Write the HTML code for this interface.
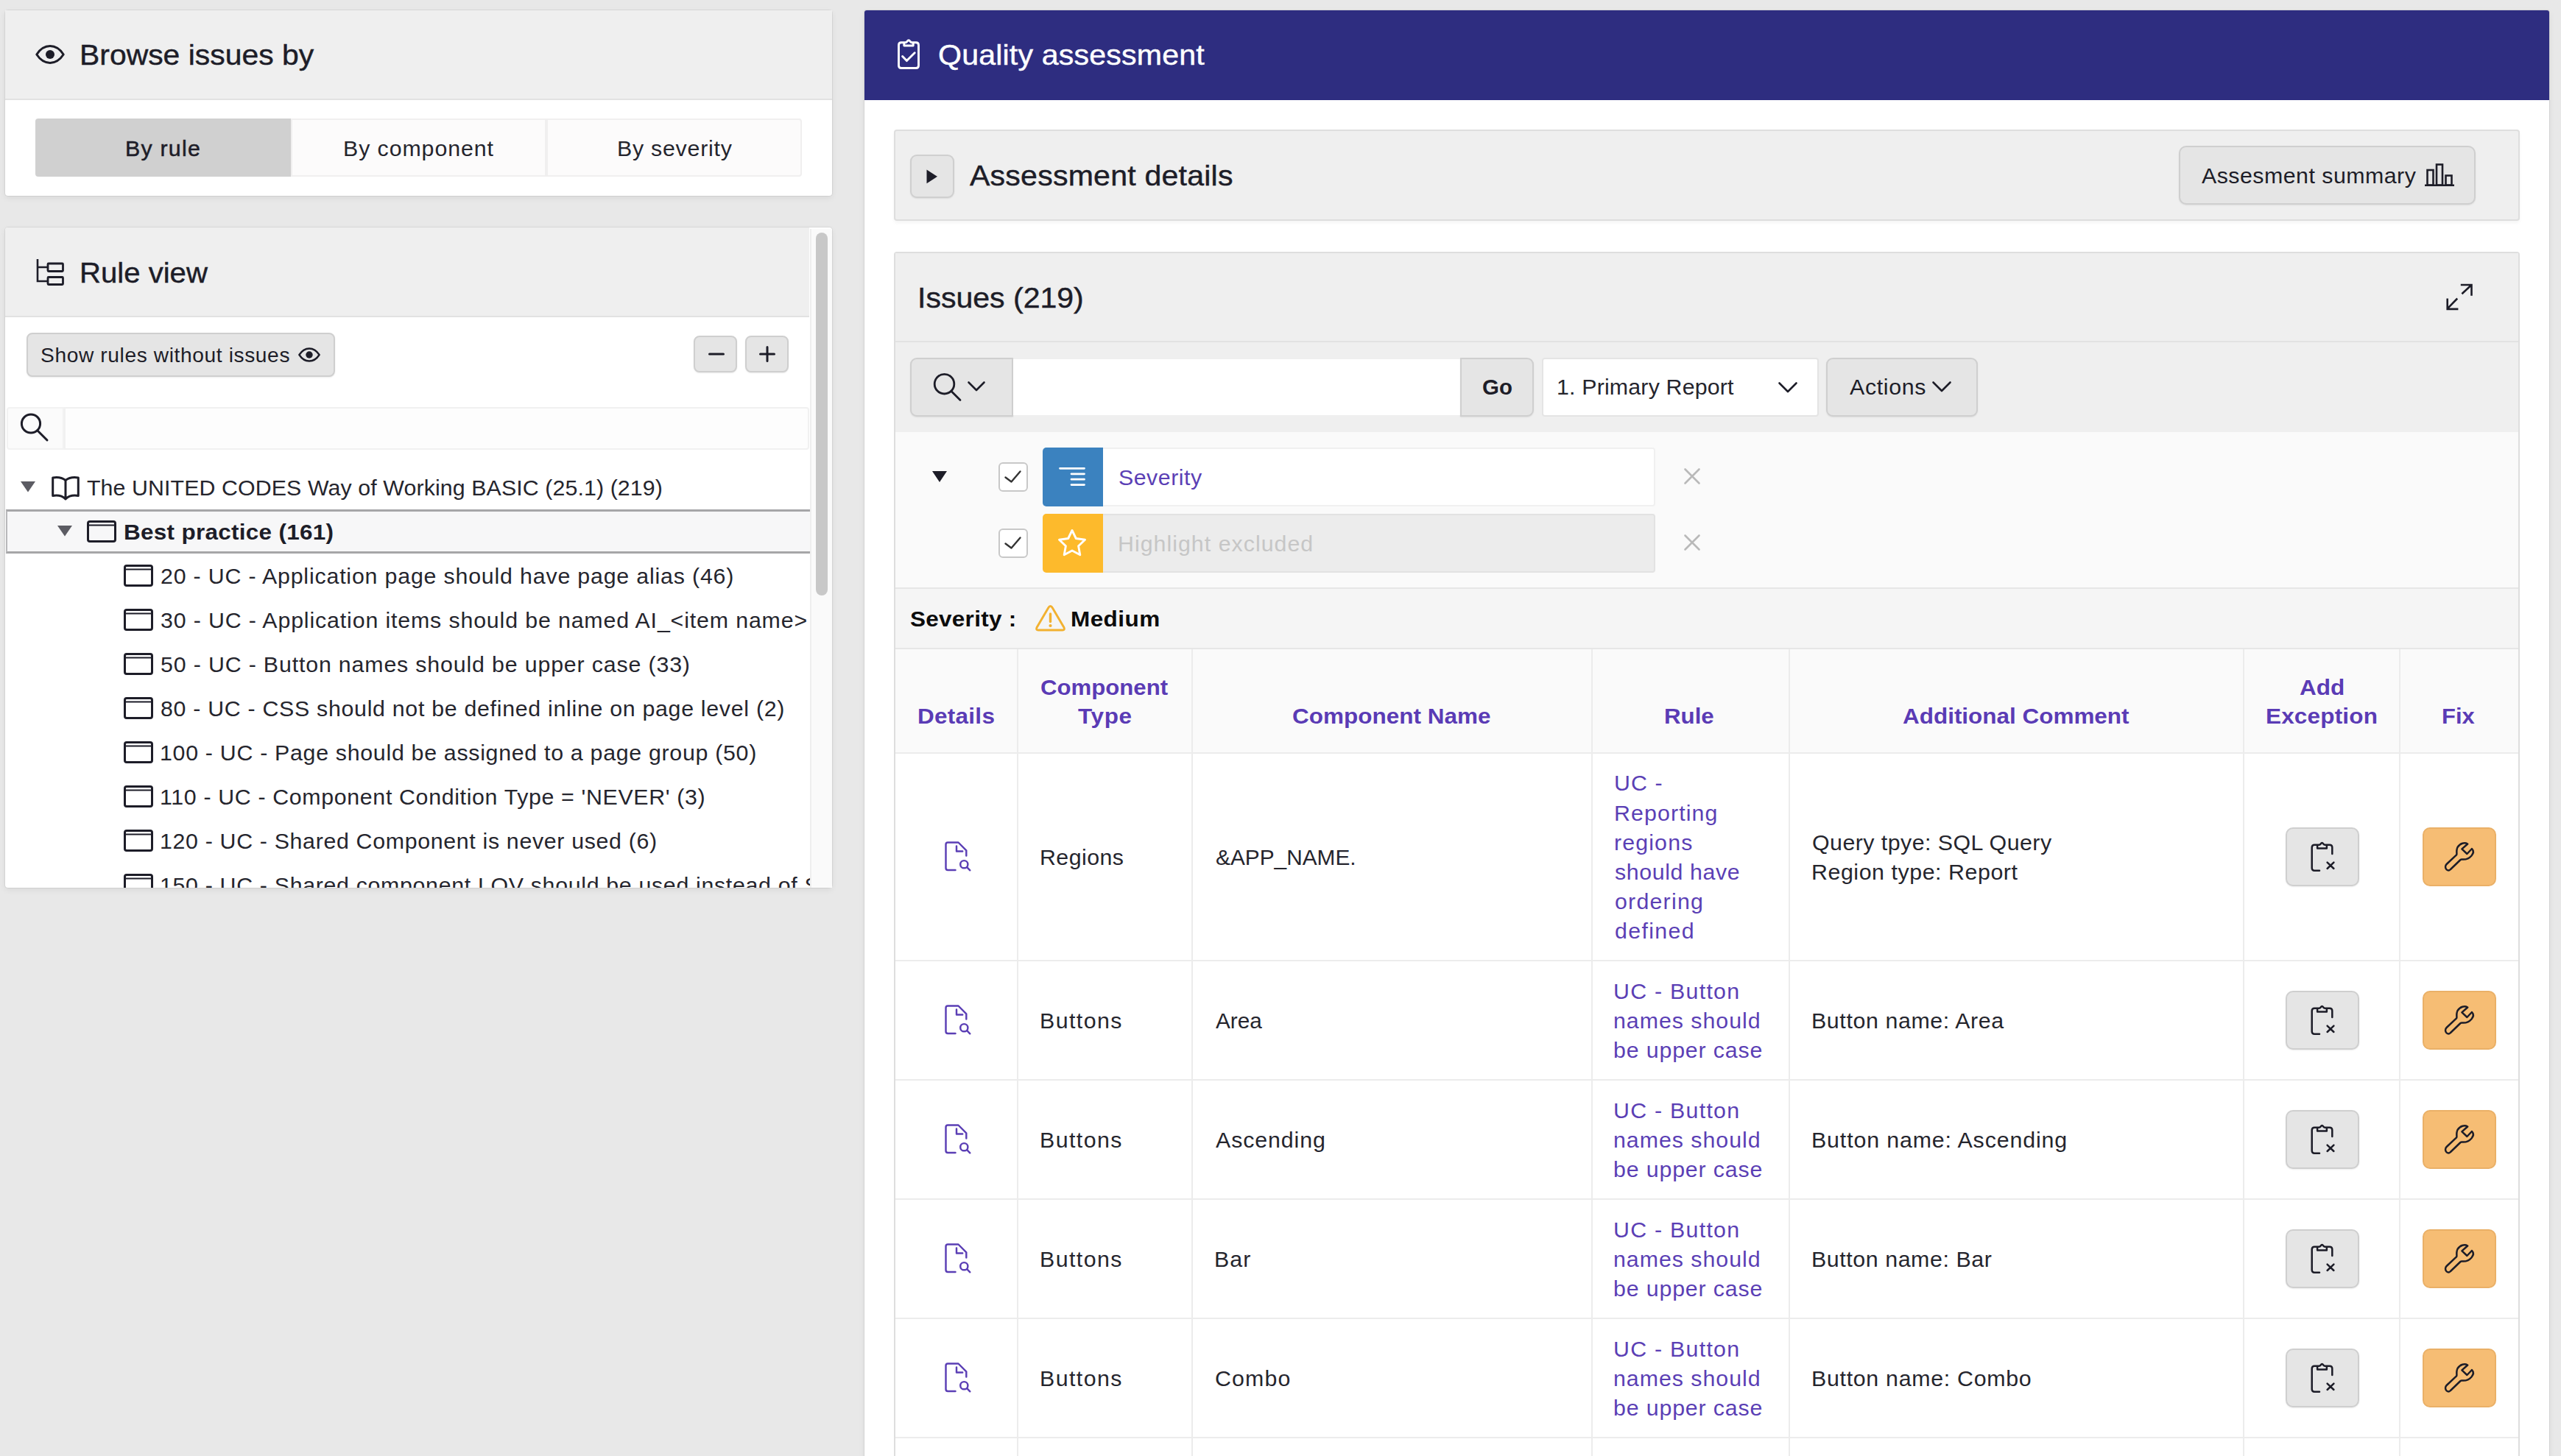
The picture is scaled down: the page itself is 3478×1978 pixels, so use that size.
<!DOCTYPE html>
<html><head><meta charset="utf-8">
<style>
*{box-sizing:border-box;margin:0;padding:0}
html,body{width:3478px;height:1978px;overflow:hidden;background:#e8e8e8;font-family:"Liberation Sans",sans-serif;color:#25252d}
.a{position:absolute}
.t{position:absolute;white-space:nowrap;line-height:1}
svg{position:absolute;overflow:visible}
.panel{position:absolute;background:#fff;box-shadow:0 3px 8px rgba(0,0,0,.07),0 0 0 1px rgba(0,0,0,.06);border-radius:4px}
.phead{position:absolute;left:0;top:0;right:0;height:122px;background:#efefef;border-bottom:2px solid #e2e2e2}
.h1{font-size:39.7px;color:#1d1d28;-webkit-text-stroke:.45px #1d1d28}
.btn{position:absolute;background:#e5e5e5;border:2px solid #cfcfcf;border-radius:8px;box-shadow:0 1px 2px rgba(0,0,0,.08)}
.body{font-size:29.3px;color:#25252d}
.lnk{color:#5b3fb5}
</style></head><body>

<!-- LEFT PANEL 1 -->
<div class="panel" style="left:7px;top:14px;width:1123px;height:252px">
  <div class="phead"></div>
</div>

<!-- L1 content -->
<svg style="left:48px;top:61px" width="40" height="26" viewBox="0 0 40 26"><path d="M1.8 13 C8 3.5 14 1.6 20 1.6 S32 3.5 38.2 13 C32 22.5 26 24.4 20 24.4 S8 22.5 1.8 13Z" fill="none" stroke="#1d1d28" stroke-width="3" stroke-linejoin="round"/><circle cx="20" cy="13" r="6" fill="#1d1d28"/></svg>
<div class="t h1" id="t_browse" style="left:107.6px;top:54.8px;letter-spacing:0.000px;transform:scaleX(1.0304);transform-origin:0 0;">Browse issues by</div>
<div class="a" style="left:48px;top:161px;width:347px;height:79px;background:#d0d0d0;border-radius:4px 0 0 4px"></div>
<div class="a" style="left:395px;top:161px;width:347px;height:79px;background:#fcfbfb;border:2px solid #f0efef"></div>
<div class="a" style="left:742px;top:161px;width:347px;height:79px;background:#fcfbfb;border:2px solid #f0efef;border-radius:0 4px 4px 0"></div>
<div class="t" id="t_byrule" style="left:170.4px;top:187.2px;letter-spacing:1.195px;transform:scaleX(1.0350);transform-origin:0 0;font-size:29.3px;color:#1d1d28;-webkit-text-stroke:.5px #1d1d28">By rule</div>
<div class="t" id="t_bycomp" style="left:466.3px;top:187.2px;letter-spacing:0.889px;transform:scaleX(1.0350);transform-origin:0 0;font-size:29.3px;color:#25252d">By component</div>
<div class="t" id="t_bysev" style="left:837.6px;top:187.2px;letter-spacing:0.731px;transform:scaleX(1.0350);transform-origin:0 0;font-size:29.3px;color:#25252d">By severity</div>
<!-- LEFT PANEL 2 -->
<div class="panel" id="p2" style="left:7px;top:309px;width:1123px;height:897px;overflow:hidden">
  <div class="phead" style="right:31px"></div>
</div>

<!-- L2 content -->
<svg style="left:49px;top:351px" width="38" height="37" viewBox="0 0 38 37"><path d="M2 1V31H15M2 12H15" fill="none" stroke="#1d1d28" stroke-width="2.6"/><rect x="16" y="7" width="20.5" height="10.5" rx="1" fill="none" stroke="#1d1d28" stroke-width="2.8"/><rect x="16" y="25.5" width="20.5" height="10" rx="1" fill="none" stroke="#1d1d28" stroke-width="2.8"/></svg>
<div class="t h1" id="t_ruleview" style="left:107.7px;top:351.4px;letter-spacing:0.000px;transform:scaleX(1.0106);transform-origin:0 0;">Rule view</div>
<div class="btn" style="left:36px;top:452px;width:419px;height:60px"></div>
<div class="t" id="t_show" style="left:55.4px;top:469.0px;letter-spacing:0.592px;transform:scaleX(1.0350);transform-origin:0 0;font-size:27.2px;color:#1d1d28">Show rules without issues</div>
<svg style="left:405px;top:472px" width="30" height="20" viewBox="0 0 40 26"><path d="M1.8 13 C8 3.5 14 1.6 20 1.6 S32 3.5 38.2 13 C32 22.5 26 24.4 20 24.4 S8 22.5 1.8 13Z" fill="none" stroke="#1d1d28" stroke-width="3.2" stroke-linejoin="round"/><circle cx="20" cy="13" r="6.3" fill="#1d1d28"/></svg>
<div class="btn" style="left:942px;top:456px;width:59px;height:50px"></div>
<div class="btn" style="left:1012px;top:456px;width:59px;height:50px"></div>
<svg style="left:962px;top:479px" width="22" height="4"><line x1="1.5" y1="2" x2="20.5" y2="2" stroke="#1d1d28" stroke-width="3" stroke-linecap="round"/></svg>
<svg style="left:1031px;top:470px" width="22" height="22"><path d="M1.5 11H20.5M11 1.5V20.5" stroke="#1d1d28" stroke-width="3" stroke-linecap="round" fill="none"/></svg>
<div class="a" style="left:9px;top:553px;width:78px;height:58px;background:#fbfbfb;border:2px solid #f2f2f2;border-radius:4px 0 0 4px"></div>
<div class="a" style="left:87px;top:553px;width:1012px;height:58px;background:#fdfdfd;border:2px solid #f1f1f1;border-radius:0 4px 4px 0"></div>
<svg style="left:26px;top:560px" width="42" height="42" viewBox="0 0 42 42"><circle cx="16" cy="15.5" r="12.6" fill="none" stroke="#1d1d28" stroke-width="3"/><line x1="25" y1="25" x2="38" y2="38" stroke="#1d1d28" stroke-width="3" stroke-linecap="round"/></svg>
<div class="a" id="tree" style="left:7px;top:620px;width:1094px;height:586px;overflow:hidden">
<div class="a" style="left:0;top:72px;width:1100px;height:60px;background:#f7f7f8;border:3px solid #a6a6a8;border-left:2px solid #b8b8ba;border-right:none;margin-left:1px"></div>
<svg style="left:21.0px;top:34.25px" width="20" height="14.5" viewBox="0 0 20 14.5"><path d="M0 0H20L10.0 14.5Z" fill="#5c5c63"/></svg><svg style="left:63px;top:26px" width="38" height="35" viewBox="0 0 38 35"><path d="M19 6.5C14 2.5 8 2 1.7 3V27.5C8 26.5 14 27 19 32C24 27 30 26.500 36.300 27.500V3C30 2 24 2.500 19 6.500V31" fill="none" stroke="#1d1d28" stroke-width="3" stroke-linejoin="round"/></svg><div class="t body" id="t_root" style="left:111.4px;top:28.1px;letter-spacing:0.099px;transform:scaleX(1.0350);transform-origin:0 0;">The UNITED CODES Way of Working BASIC (25.1) (219)</div><svg style="left:71.0px;top:94.25px" width="20" height="14.5" viewBox="0 0 20 14.5"><path d="M0 0H20L10.0 14.5Z" fill="#5c5c63"/></svg><svg style="left:111px;top:87px" width="40" height="30" viewBox="0 0 40 30"><rect x="1.5" y="1.5" width="37" height="27" rx="2.5" fill="none" stroke="#1d1d28" stroke-width="3"/><line x1="1.5" y1="6.5" x2="38.5" y2="6.5" stroke="#1d1d28" stroke-width="2.2"/></svg><div class="t body" id="t_best" style="left:160.7px;top:88.4px;letter-spacing:0.255px;transform:scaleX(1.0750);transform-origin:0 0;font-weight:bold;color:#1d1d28">Best practice (161)</div><svg style="left:161px;top:147px" width="40" height="30" viewBox="0 0 40 30"><rect x="1.5" y="1.5" width="37" height="27" rx="2.5" fill="none" stroke="#1d1d28" stroke-width="3"/><line x1="1.5" y1="6.5" x2="38.5" y2="6.5" stroke="#1d1d28" stroke-width="2.2"/></svg><div class="t body" id="t_r0" style="left:211.0px;top:148.4px;letter-spacing:0.792px;transform:scaleX(1.0350);transform-origin:0 0;">20 - UC - Application page should have page alias (46)</div><svg style="left:161px;top:207px" width="40" height="30" viewBox="0 0 40 30"><rect x="1.5" y="1.5" width="37" height="27" rx="2.5" fill="none" stroke="#1d1d28" stroke-width="3"/><line x1="1.5" y1="6.5" x2="38.5" y2="6.5" stroke="#1d1d28" stroke-width="2.2"/></svg><div class="t body" id="t_r1" style="left:211.0px;top:208.4px;letter-spacing:0.829px;transform:scaleX(1.0350);transform-origin:0 0;">30 - UC - Application items should be named AI_&lt;item name&gt;</div><svg style="left:161px;top:267px" width="40" height="30" viewBox="0 0 40 30"><rect x="1.5" y="1.5" width="37" height="27" rx="2.5" fill="none" stroke="#1d1d28" stroke-width="3"/><line x1="1.5" y1="6.5" x2="38.5" y2="6.5" stroke="#1d1d28" stroke-width="2.2"/></svg><div class="t body" id="t_r2" style="left:211.0px;top:268.4px;letter-spacing:0.816px;transform:scaleX(1.0350);transform-origin:0 0;">50 - UC - Button names should be upper case (33)</div><svg style="left:161px;top:327px" width="40" height="30" viewBox="0 0 40 30"><rect x="1.5" y="1.5" width="37" height="27" rx="2.5" fill="none" stroke="#1d1d28" stroke-width="3"/><line x1="1.5" y1="6.5" x2="38.5" y2="6.5" stroke="#1d1d28" stroke-width="2.2"/></svg><div class="t body" id="t_r3" style="left:211.0px;top:328.4px;letter-spacing:0.682px;transform:scaleX(1.0350);transform-origin:0 0;">80 - UC - CSS should not be defined inline on page level (2)</div><svg style="left:161px;top:387px" width="40" height="30" viewBox="0 0 40 30"><rect x="1.5" y="1.5" width="37" height="27" rx="2.5" fill="none" stroke="#1d1d28" stroke-width="3"/><line x1="1.5" y1="6.5" x2="38.5" y2="6.5" stroke="#1d1d28" stroke-width="2.2"/></svg><div class="t body" id="t_r4" style="left:209.9px;top:388.4px;letter-spacing:0.684px;transform:scaleX(1.0350);transform-origin:0 0;">100 - UC - Page should be assigned to a page group (50)</div><svg style="left:161px;top:447px" width="40" height="30" viewBox="0 0 40 30"><rect x="1.5" y="1.5" width="37" height="27" rx="2.5" fill="none" stroke="#1d1d28" stroke-width="3"/><line x1="1.5" y1="6.5" x2="38.5" y2="6.5" stroke="#1d1d28" stroke-width="2.2"/></svg><div class="t body" id="t_r5" style="left:209.9px;top:448.4px;letter-spacing:0.637px;transform:scaleX(1.0350);transform-origin:0 0;">110 - UC - Component Condition Type = 'NEVER' (3)</div><svg style="left:161px;top:507px" width="40" height="30" viewBox="0 0 40 30"><rect x="1.5" y="1.5" width="37" height="27" rx="2.5" fill="none" stroke="#1d1d28" stroke-width="3"/><line x1="1.5" y1="6.5" x2="38.5" y2="6.5" stroke="#1d1d28" stroke-width="2.2"/></svg><div class="t body" id="t_r6" style="left:209.9px;top:508.4px;letter-spacing:0.650px;transform:scaleX(1.0350);transform-origin:0 0;">120 - UC - Shared Component is never used (6)</div><svg style="left:161px;top:567px" width="40" height="30" viewBox="0 0 40 30"><rect x="1.5" y="1.5" width="37" height="27" rx="2.5" fill="none" stroke="#1d1d28" stroke-width="3"/><line x1="1.5" y1="6.5" x2="38.5" y2="6.5" stroke="#1d1d28" stroke-width="2.2"/></svg><div class="t body" id="t_r7" style="left:209.9px;top:568.4px;letter-spacing:0.656px;transform:scaleX(1.0350);transform-origin:0 0;">150 - UC - Shared component LOV should be used instead of Static values</div></div>
<div class="a" style="left:1100px;top:311px;width:30px;height:895px;background:#fafafa;border-left:2px solid #eeeeee"></div><div class="a" style="left:1108px;top:316px;width:16px;height:493px;background:#c8c8c8;border-radius:8px"></div>
<!-- RIGHT PANEL -->
<div class="panel" id="rp" style="left:1174px;top:14px;width:2288px;height:2000px;border-radius:3px">
  <div class="a" style="left:0;top:0;right:0;height:122px;background:#2e2d80;border-radius:3px 3px 0 0"></div>
</div>


<!-- R content -->
<svg style="left:1218px;top:53px" width="32" height="42" viewBox="0 0 32 42"><path d="M2.500 8.200Q2.500 4.700 6 4.700H11.500C13 4.700 13.400 4 14 3.200Q16 0.300 18 3.200C18.600 4 19 4.700 20.500 4.700H26Q29.500 4.700 29.500 8.200V36Q29.500 39.500 26 39.500H6Q2.500 39.500 2.500 36ZM9.800 4.700V9H22.200V4.700M7.600 23.600L13.400 29.600L24.200 18.700" fill="none" stroke="#fff" stroke-width="2.9" stroke-linecap="round" stroke-linejoin="round"/></svg>
<div class="t h1" id="t_qa" style="left:1273.6px;top:55.0px;letter-spacing:0.185px;transform:scaleX(1.0350);transform-origin:0 0;color:#fff;-webkit-text-stroke:.45px #fff">Quality assessment</div>

<div class="a" style="left:1214px;top:176px;width:2208px;height:124px;background:#efefef;border:2px solid #dedede;border-radius:4px;box-shadow:0 3px 4px rgba(0,0,0,.04)"></div>
<div class="btn" style="left:1236px;top:210px;width:60px;height:59px;border-radius:9px"></div>
<svg style="left:1258px;top:230px" width="16" height="20"><path d="M0.500 0.500L15 9.800L0.500 19.200Z" fill="#1d1d28"/></svg>
<div class="t h1" id="t_ad" style="left:1317.0px;top:219.0px;letter-spacing:0.203px;transform:scaleX(1.0350);transform-origin:0 0;">Assessment details</div>
<div class="btn" style="left:2959px;top:198px;width:403px;height:80px;border-radius:10px"></div>
<div class="t" id="t_as" style="left:2990.4px;top:224.2px;letter-spacing:0.468px;transform:scaleX(1.0350);transform-origin:0 0;font-size:29.3px;color:#1d1d28">Assesment summary</div>
<svg style="left:3292px;top:221px" width="42" height="33" viewBox="0 0 42 33"><path d="M1 30.700H41" stroke="#1d1d28" stroke-width="2.6"/><rect x="4.500" y="10" width="8" height="20.500" fill="none" stroke="#1d1d28" stroke-width="2.6"/><rect x="17" y="2.500" width="8" height="28" fill="none" stroke="#1d1d28" stroke-width="2.6"/><rect x="29.500" y="17.500" width="8" height="13" fill="none" stroke="#1d1d28" stroke-width="2.6"/></svg>

<div class="a" id="issues" style="left:1214px;top:342px;width:2208px;height:1700px;background:#fff;border:2px solid #dedede;border-radius:4px"></div>
<div class="a" style="left:1216px;top:344px;width:2204px;height:121px;background:#efefef;border-bottom:2px solid #e2e2e2"></div>
<div class="t h1" id="t_iss" style="left:1245.6px;top:385.1px;letter-spacing:0.000px;transform:scaleX(1.0338);transform-origin:0 0;">Issues (219)</div>
<svg style="left:3321px;top:385px" width="38" height="38" viewBox="0 0 38 38"><path d="M22.400 14.300L35.500 2M20.800 2H35.500V16.700M16.200 20.500L2.700 34.400M2.700 20.500V34.900H17.400" fill="none" stroke="#1d1d28" stroke-width="2.600" stroke-linecap="butt" stroke-linejoin="miter"/></svg>

<div class="a" style="left:1216px;top:465px;width:2204px;height:122px;background:#efefef"></div>
<div class="btn" style="left:1236px;top:486px;width:140px;height:80px;border-radius:9px 0 0 9px"></div>
<svg style="left:1266px;top:505px" width="44" height="44" viewBox="0 0 44 44"><circle cx="16.500" cy="16.700" r="13.300" fill="none" stroke="#1d1d28" stroke-width="2.800"/><line x1="26" y1="26.500" x2="38" y2="38.500" stroke="#1d1d28" stroke-width="2.800" stroke-linecap="round"/></svg>
<svg style="left:1314px;top:518px" width="24" height="14"><path d="M1.500 1.500L12 12L22.500 1.500" fill="none" stroke="#1d1d28" stroke-width="2.600" stroke-linecap="round" stroke-linejoin="round"/></svg>
<div class="a" style="left:1376px;top:488px;width:608px;height:76px;background:#fff"></div>
<div class="btn" style="left:1983px;top:486px;width:100px;height:80px;border-radius:0 9px 9px 0"></div>
<div class="t" id="t_go" style="left:2013.3px;top:511.1px;letter-spacing:0.000px;transform:scaleX(1.0051);transform-origin:0 0;font-size:29.3px;font-weight:bold;color:#1d1d28">Go</div>
<div class="a" style="left:2094px;top:486px;width:376px;height:80px;background:#fff;border:2px solid #e4e4e4;border-radius:4px"></div>
<div class="t" id="t_pr" style="left:2113.7px;top:511.1px;letter-spacing:0.176px;transform:scaleX(1.0350);transform-origin:0 0;font-size:29.3px;color:#25252d">1. Primary Report</div>
<svg style="left:2415px;top:519px" width="26" height="15"><path d="M1.500 1.500L13 13L24.500 1.500" fill="none" stroke="#1d1d28" stroke-width="2.600" stroke-linecap="round" stroke-linejoin="round"/></svg>
<div class="btn" style="left:2480px;top:486px;width:206px;height:80px;border-radius:9px"></div>
<div class="t" id="t_act" style="left:2512.0px;top:511.1px;letter-spacing:0.640px;transform:scaleX(1.0350);transform-origin:0 0;font-size:29.3px;color:#1d1d28">Actions</div>
<svg style="left:2624px;top:518px" width="26" height="15"><path d="M1.500 1.500L13 13L24.500 1.500" fill="none" stroke="#1d1d28" stroke-width="2.600" stroke-linecap="round" stroke-linejoin="round"/></svg>

<div class="a" style="left:1216px;top:587px;width:2204px;height:213px;background:#fafafa;border-bottom:2px solid #e6e6e6"></div>
<svg style="left:1266px;top:640px" width="20" height="15"><path d="M0 0H20L10 15Z" fill="#1d1d28"/></svg>
<div class="a" style="left:1356px;top:628px;width:40px;height:40px;background:#fff;border:2px solid #c8c8c8;border-radius:6px"></div><svg style="left:1356px;top:628px" width="40" height="40"><path d="M9.500 20.500L17.500 26.500L29.500 12.500" fill="none" stroke="#333" stroke-width="2.4" stroke-linecap="round" stroke-linejoin="round"/></svg><div class="a" style="left:1356px;top:718px;width:40px;height:40px;background:#fff;border:2px solid #c8c8c8;border-radius:6px"></div><svg style="left:1356px;top:718px" width="40" height="40"><path d="M9.500 20.500L17.500 26.500L29.500 12.500" fill="none" stroke="#333" stroke-width="2.4" stroke-linecap="round" stroke-linejoin="round"/></svg>
<div class="a" style="left:1416px;top:608px;width:82px;height:80px;background:#3b82bf;border-radius:5px 0 0 5px"></div>
<svg style="left:1438px;top:634px" width="36" height="27"><path d="M1.500 2.300H34.500M17 9.800H34.500M17 17.200H34.500M17 24.600H34.500" stroke="#fff" stroke-width="2.800" stroke-linecap="round"/></svg>
<div class="a" style="left:1498px;top:608px;width:750px;height:80px;background:#fff;border:2px solid #f0f0f0;border-left:none;border-radius:0 4px 4px 0"></div>
<div class="t lnk" id="t_sev" style="left:1518.7px;top:634.2px;letter-spacing:0.500px;transform:scaleX(1.0350);transform-origin:0 0;font-size:29.3px">Severity</div>
<div class="a" style="left:1416px;top:698px;width:82px;height:80px;background:#fdba2c;border-radius:5px 0 0 5px"></div>
<svg style="left:1436px;top:718px" width="40" height="38" viewBox="0 0 40 38"><path d="M20 2.500L25.300 13.500L37.500 15.200L28.600 23.700L30.800 35.800L20 30L9.200 35.800L11.400 23.700L2.500 15.200L14.700 13.500Z" fill="none" stroke="#fff" stroke-width="2.900" stroke-linejoin="round"/></svg>
<div class="a" style="left:1498px;top:698px;width:750px;height:80px;background:#ececec;border:2px solid #e2e2e2;border-left:none;border-radius:0 4px 4px 0"></div>
<div class="t" id="t_hl" style="left:1517.6px;top:723.9px;letter-spacing:0.987px;transform:scaleX(1.0350);transform-origin:0 0;font-size:29.3px;color:#c6c6c6">Highlight excluded</div>
<svg style="left:2287px;top:636px" width="22" height="22"><path d="M1.500 1.500L20.500 20.500M20.500 1.500L1.500 20.500" stroke="#b9b9b9" stroke-width="2.6" stroke-linecap="round"/></svg><svg style="left:2287px;top:726px" width="22" height="22"><path d="M1.500 1.500L20.500 20.500M20.500 1.500L1.500 20.500" stroke="#b9b9b9" stroke-width="2.6" stroke-linecap="round"/></svg>
<div class="a" style="left:1216px;top:800px;width:2204px;height:82px;background:#f5f5f5;border-bottom:2px solid #e6e6e6"></div>
<div class="t" id="t_sevl" style="left:1236.1px;top:826.0px;letter-spacing:0.248px;transform:scaleX(1.0750);transform-origin:0 0;font-size:29.3px;font-weight:bold;color:#0c0c0c">Severity :</div>
<svg style="left:1405px;top:821px" width="43" height="37" viewBox="0 0 43 37"><path d="M21.500 2.500Q23 2.500 24 4.300L40 31.500Q41.500 35 38 35H5Q1.500 35 3 31.500L19 4.300Q20 2.500 21.500 2.500Z" fill="none" stroke="#f2b130" stroke-width="2.900" stroke-linejoin="round"/><path d="M21.500 13V23.500" stroke="#f2b130" stroke-width="3.400" stroke-linecap="round"/><circle cx="21.500" cy="29" r="2.100" fill="#f2b130"/></svg>
<div class="t" id="t_med" style="left:1454.1px;top:826.0px;letter-spacing:0.405px;transform:scaleX(1.0750);transform-origin:0 0;font-size:29.3px;font-weight:bold;color:#0c0c0c">Medium</div>
<div class="a" style="left:1216px;top:882px;width:2204px;height:141px;background:#fafafa"></div>
<div class="a" style="left:1216px;top:1022px;width:2204px;height:2px;background:#ececec"></div><div class="a" style="left:1216px;top:1304px;width:2204px;height:2px;background:#ececec"></div><div class="a" style="left:1216px;top:1466px;width:2204px;height:2px;background:#ececec"></div><div class="a" style="left:1216px;top:1628px;width:2204px;height:2px;background:#ececec"></div><div class="a" style="left:1216px;top:1790px;width:2204px;height:2px;background:#ececec"></div><div class="a" style="left:1216px;top:1952px;width:2204px;height:2px;background:#ececec"></div><div class="a" style="left:1381px;top:882px;width:2px;height:1100px;background:#ececec"></div><div class="a" style="left:1618px;top:882px;width:2px;height:1100px;background:#ececec"></div><div class="a" style="left:2161px;top:882px;width:2px;height:1100px;background:#ececec"></div><div class="a" style="left:2429px;top:882px;width:2px;height:1100px;background:#ececec"></div><div class="a" style="left:3046px;top:882px;width:2px;height:1100px;background:#ececec"></div><div class="a" style="left:3258px;top:882px;width:2px;height:1100px;background:#ececec"></div>
<style>.hd{font-size:29.3px;font-weight:bold;color:#5a3bb5}.cell{font-size:29.3px;color:#25252d}.cell.lnk{color:#5b3fb5}</style><div class="t hd" id="h_det" style="left:1246.1px;top:958.1px;letter-spacing:0.252px;transform:scaleX(1.0750);transform-origin:0 0;">Details</div><div class="t hd" id="h_c1" style="left:1412.6px;top:918.6px;letter-spacing:0.000px;transform:scaleX(1.0636);transform-origin:0 0;">Component</div><div class="t hd" id="h_c2" style="left:1464.4px;top:958.3px;letter-spacing:0.597px;transform:scaleX(1.0750);transform-origin:0 0;">Type</div><div class="t hd" id="h_cn" style="left:1755.0px;top:958.3px;letter-spacing:0.000px;transform:scaleX(1.0747);transform-origin:0 0;">Component Name</div><div class="t hd" id="h_rule" style="left:2260.4px;top:958.3px;letter-spacing:0.000px;transform:scaleX(1.0672);transform-origin:0 0;">Rule</div><div class="t hd" id="h_ac" style="left:2584.3px;top:958.3px;letter-spacing:0.000px;transform:scaleX(1.0737);transform-origin:0 0;">Additional Comment</div><div class="t hd" id="h_a1" style="left:3122.7px;top:918.6px;letter-spacing:0.023px;transform:scaleX(1.0750);transform-origin:0 0;">Add</div><div class="t hd" id="h_a2" style="left:3076.7px;top:958.3px;letter-spacing:0.163px;transform:scaleX(1.0750);transform-origin:0 0;">Exception</div><div class="t hd" id="h_fix" style="left:3315.7px;top:958.3px;letter-spacing:0.000px;transform:scaleX(1.0550);transform-origin:0 0;">Fix</div>
<svg style="left:1283px;top:1142.6px" width="36" height="41" viewBox="0 0 36 41"><path d="M14.5 39H4.2Q1.5 39 1.5 36.300V4.200Q1.500 1.500 4.200 1.500H18.500L29.300 12.300V19.500M16 6.500V13.500H24.200" fill="none" stroke="#5b3fb5" stroke-width="2.45" stroke-linecap="round" stroke-linejoin="round"/><circle cx="26.3" cy="31.200" r="5.1" fill="none" stroke="#5b3fb5" stroke-width="2.45"/><line x1="30.200" y1="35.200" x2="34.300" y2="39.300" stroke="#5b3fb5" stroke-width="2.45" stroke-linecap="round"/></svg><div class="t cell " id="c0t_0" style="left:1412.3px;top:1150.4px;letter-spacing:0.444px;transform:scaleX(1.0350);transform-origin:0 0;">Regions</div><div class="t cell " id="c0n_0" style="left:1650.5px;top:1150.4px;letter-spacing:0.000px;transform:scaleX(1.0179);transform-origin:0 0;">&amp;APP_NAME.</div><div class="t cell lnk" id="c0r_0" style="left:2191.9px;top:1049.4px;letter-spacing:1.064px;transform:scaleX(1.0350);transform-origin:0 0;">UC -</div><div class="t cell lnk" id="c0r_1" style="left:2191.9px;top:1089.5px;letter-spacing:1.074px;transform:scaleX(1.0350);transform-origin:0 0;">Reporting</div><div class="t cell lnk" id="c0r_2" style="left:2191.9px;top:1129.6px;letter-spacing:1.102px;transform:scaleX(1.0350);transform-origin:0 0;">regions</div><div class="t cell lnk" id="c0r_3" style="left:2193.0px;top:1169.8px;letter-spacing:0.584px;transform:scaleX(1.0350);transform-origin:0 0;">should have</div><div class="t cell lnk" id="c0r_4" style="left:2193.0px;top:1209.9px;letter-spacing:1.190px;transform:scaleX(1.0350);transform-origin:0 0;">ordering</div><div class="t cell lnk" id="c0r_5" style="left:2193.0px;top:1250.0px;letter-spacing:1.312px;transform:scaleX(1.0350);transform-origin:0 0;">defined</div><div class="t cell " id="c0c_0" style="left:2461.2px;top:1129.7px;letter-spacing:0.452px;transform:scaleX(1.0350);transform-origin:0 0;">Query tpye: SQL Query</div><div class="t cell " id="c0c_1" style="left:2460.1px;top:1170.1px;letter-spacing:0.549px;transform:scaleX(1.0350);transform-origin:0 0;">Region type: Report</div><div class="btn" style="left:3104px;top:1124.0px;width:100px;height:80px;border-radius:10px"></div><svg style="left:3138px;top:1143.5px" width="34" height="41" viewBox="0 0 34 41"><path d="M12 38.700H5.200Q1.700 38.700 1.700 35.200V7.200Q1.700 3.700 5.200 3.700H11.500C13 3.700 13.200 3 13.800 2.200Q15.460 -0.200 17.100 2.200C17.700 3 17.900 3.700 19.400 3.700H25.800Q29.300 3.700 29.300 7.200V16M9.100 3.700V8.600H21.850V3.700M22.600 27.600L31.400 36M31.400 27.600L22.600 36" fill="none" stroke="#1d1d28" stroke-width="2.5" stroke-linecap="round" stroke-linejoin="round"/></svg><div class="a" style="left:3290px;top:1124.0px;width:100px;height:80px;border-radius:10px;background:#f6bd74;border:2px solid #eab067"></div><svg style="left:3320px;top:1143.5px" width="40" height="40" viewBox="0 0 40 40"><path d="M31.2 2.500C27 0 21 1.500 17.500 7C16 10 16.200 13.500 16.400 16.200Q16.400 17.200 15.500 17.900L2.600 30C0.500 32 0.500 35.500 2.600 37.400C4.500 39 6.500 38.600 8 37L21.500 24Q22.300 23.400 23.500 23.500C28 24 33 22.500 36.500 18.500C39 15.500 39.800 12 37 9L30.400 16L23.400 9.400Z" fill="none" stroke="#1d1d28" stroke-width="2.5" stroke-linecap="round" stroke-linejoin="round"/></svg>
<svg style="left:1283px;top:1364.6px" width="36" height="41" viewBox="0 0 36 41"><path d="M14.5 39H4.2Q1.5 39 1.5 36.300V4.200Q1.500 1.500 4.200 1.500H18.500L29.300 12.300V19.500M16 6.500V13.500H24.200" fill="none" stroke="#5b3fb5" stroke-width="2.45" stroke-linecap="round" stroke-linejoin="round"/><circle cx="26.3" cy="31.200" r="5.1" fill="none" stroke="#5b3fb5" stroke-width="2.45"/><line x1="30.200" y1="35.200" x2="34.300" y2="39.300" stroke="#5b3fb5" stroke-width="2.45" stroke-linecap="round"/></svg><div class="t cell " id="c1t_0" style="left:1411.5px;top:1372.1px;letter-spacing:1.391px;transform:scaleX(1.0350);transform-origin:0 0;">Buttons</div><div class="t cell " id="c1n_0" style="left:1650.9px;top:1372.1px;letter-spacing:-0.000px;transform:scaleX(1.0145);transform-origin:0 0;">Area</div><div class="t cell lnk" id="c1r_0" style="left:2191.3px;top:1331.7px;letter-spacing:1.226px;transform:scaleX(1.0350);transform-origin:0 0;">UC - Button</div><div class="t cell lnk" id="c1r_1" style="left:2191.3px;top:1372.2px;letter-spacing:0.946px;transform:scaleX(1.0350);transform-origin:0 0;">names should</div><div class="t cell lnk" id="c1r_2" style="left:2191.3px;top:1411.9px;letter-spacing:0.821px;transform:scaleX(1.0350);transform-origin:0 0;">be upper case</div><div class="t cell " id="c1c_0" style="left:2460.1px;top:1372.1px;letter-spacing:0.602px;transform:scaleX(1.0350);transform-origin:0 0;">Button name: Area</div><div class="btn" style="left:3104px;top:1346.0px;width:100px;height:80px;border-radius:10px"></div><svg style="left:3138px;top:1365.5px" width="34" height="41" viewBox="0 0 34 41"><path d="M12 38.700H5.200Q1.700 38.700 1.700 35.200V7.200Q1.700 3.700 5.200 3.700H11.500C13 3.700 13.200 3 13.800 2.200Q15.460 -0.200 17.100 2.200C17.700 3 17.900 3.700 19.400 3.700H25.800Q29.300 3.700 29.300 7.200V16M9.100 3.700V8.600H21.850V3.700M22.600 27.600L31.400 36M31.400 27.600L22.600 36" fill="none" stroke="#1d1d28" stroke-width="2.5" stroke-linecap="round" stroke-linejoin="round"/></svg><div class="a" style="left:3290px;top:1346.0px;width:100px;height:80px;border-radius:10px;background:#f6bd74;border:2px solid #eab067"></div><svg style="left:3320px;top:1365.5px" width="40" height="40" viewBox="0 0 40 40"><path d="M31.2 2.500C27 0 21 1.500 17.500 7C16 10 16.200 13.500 16.400 16.200Q16.400 17.200 15.500 17.900L2.600 30C0.500 32 0.500 35.500 2.600 37.400C4.500 39 6.500 38.600 8 37L21.500 24Q22.300 23.400 23.500 23.500C28 24 33 22.500 36.500 18.500C39 15.500 39.800 12 37 9L30.400 16L23.400 9.400Z" fill="none" stroke="#1d1d28" stroke-width="2.5" stroke-linecap="round" stroke-linejoin="round"/></svg>
<svg style="left:1283px;top:1526.6px" width="36" height="41" viewBox="0 0 36 41"><path d="M14.5 39H4.2Q1.5 39 1.5 36.300V4.200Q1.500 1.500 4.200 1.500H18.500L29.300 12.300V19.500M16 6.500V13.500H24.200" fill="none" stroke="#5b3fb5" stroke-width="2.45" stroke-linecap="round" stroke-linejoin="round"/><circle cx="26.3" cy="31.200" r="5.1" fill="none" stroke="#5b3fb5" stroke-width="2.45"/><line x1="30.200" y1="35.200" x2="34.300" y2="39.300" stroke="#5b3fb5" stroke-width="2.45" stroke-linecap="round"/></svg><div class="t cell " id="c2t_0" style="left:1411.5px;top:1534.1px;letter-spacing:1.391px;transform:scaleX(1.0350);transform-origin:0 0;">Buttons</div><div class="t cell " id="c2n_0" style="left:1650.9px;top:1534.1px;letter-spacing:0.879px;transform:scaleX(1.0350);transform-origin:0 0;">Ascending</div><div class="t cell lnk" id="c2r_0" style="left:2191.3px;top:1493.7px;letter-spacing:1.226px;transform:scaleX(1.0350);transform-origin:0 0;">UC - Button</div><div class="t cell lnk" id="c2r_1" style="left:2191.3px;top:1534.2px;letter-spacing:0.946px;transform:scaleX(1.0350);transform-origin:0 0;">names should</div><div class="t cell lnk" id="c2r_2" style="left:2191.3px;top:1573.9px;letter-spacing:0.821px;transform:scaleX(1.0350);transform-origin:0 0;">be upper case</div><div class="t cell " id="c2c_0" style="left:2460.1px;top:1534.1px;letter-spacing:0.847px;transform:scaleX(1.0350);transform-origin:0 0;">Button name: Ascending</div><div class="btn" style="left:3104px;top:1508.0px;width:100px;height:80px;border-radius:10px"></div><svg style="left:3138px;top:1527.5px" width="34" height="41" viewBox="0 0 34 41"><path d="M12 38.700H5.200Q1.700 38.700 1.700 35.200V7.200Q1.700 3.700 5.200 3.700H11.500C13 3.700 13.200 3 13.800 2.200Q15.460 -0.200 17.100 2.200C17.700 3 17.900 3.700 19.400 3.700H25.800Q29.300 3.700 29.300 7.200V16M9.100 3.700V8.600H21.850V3.700M22.600 27.600L31.400 36M31.400 27.600L22.600 36" fill="none" stroke="#1d1d28" stroke-width="2.5" stroke-linecap="round" stroke-linejoin="round"/></svg><div class="a" style="left:3290px;top:1508.0px;width:100px;height:80px;border-radius:10px;background:#f6bd74;border:2px solid #eab067"></div><svg style="left:3320px;top:1527.5px" width="40" height="40" viewBox="0 0 40 40"><path d="M31.2 2.500C27 0 21 1.500 17.500 7C16 10 16.200 13.500 16.400 16.200Q16.400 17.200 15.500 17.900L2.600 30C0.500 32 0.500 35.500 2.600 37.400C4.500 39 6.500 38.600 8 37L21.500 24Q22.300 23.400 23.500 23.500C28 24 33 22.500 36.500 18.500C39 15.500 39.800 12 37 9L30.400 16L23.400 9.400Z" fill="none" stroke="#1d1d28" stroke-width="2.5" stroke-linecap="round" stroke-linejoin="round"/></svg>
<svg style="left:1283px;top:1688.6px" width="36" height="41" viewBox="0 0 36 41"><path d="M14.5 39H4.2Q1.5 39 1.5 36.300V4.200Q1.500 1.500 4.200 1.500H18.500L29.300 12.300V19.500M16 6.500V13.500H24.200" fill="none" stroke="#5b3fb5" stroke-width="2.45" stroke-linecap="round" stroke-linejoin="round"/><circle cx="26.3" cy="31.200" r="5.1" fill="none" stroke="#5b3fb5" stroke-width="2.45"/><line x1="30.200" y1="35.200" x2="34.300" y2="39.300" stroke="#5b3fb5" stroke-width="2.45" stroke-linecap="round"/></svg><div class="t cell " id="c3t_0" style="left:1411.5px;top:1696.1px;letter-spacing:1.391px;transform:scaleX(1.0350);transform-origin:0 0;">Buttons</div><div class="t cell " id="c3n_0" style="left:1648.8px;top:1696.1px;letter-spacing:1.012px;transform:scaleX(1.0350);transform-origin:0 0;">Bar</div><div class="t cell lnk" id="c3r_0" style="left:2191.3px;top:1655.7px;letter-spacing:1.226px;transform:scaleX(1.0350);transform-origin:0 0;">UC - Button</div><div class="t cell lnk" id="c3r_1" style="left:2191.3px;top:1696.2px;letter-spacing:0.946px;transform:scaleX(1.0350);transform-origin:0 0;">names should</div><div class="t cell lnk" id="c3r_2" style="left:2191.3px;top:1735.9px;letter-spacing:0.821px;transform:scaleX(1.0350);transform-origin:0 0;">be upper case</div><div class="t cell " id="c3c_0" style="left:2460.1px;top:1696.1px;letter-spacing:0.566px;transform:scaleX(1.0350);transform-origin:0 0;">Button name: Bar</div><div class="btn" style="left:3104px;top:1670.0px;width:100px;height:80px;border-radius:10px"></div><svg style="left:3138px;top:1689.5px" width="34" height="41" viewBox="0 0 34 41"><path d="M12 38.700H5.200Q1.700 38.700 1.700 35.200V7.200Q1.700 3.700 5.200 3.700H11.500C13 3.700 13.200 3 13.800 2.200Q15.460 -0.200 17.100 2.200C17.700 3 17.900 3.700 19.400 3.700H25.800Q29.300 3.700 29.300 7.200V16M9.100 3.700V8.600H21.850V3.700M22.600 27.600L31.400 36M31.400 27.600L22.600 36" fill="none" stroke="#1d1d28" stroke-width="2.5" stroke-linecap="round" stroke-linejoin="round"/></svg><div class="a" style="left:3290px;top:1670.0px;width:100px;height:80px;border-radius:10px;background:#f6bd74;border:2px solid #eab067"></div><svg style="left:3320px;top:1689.5px" width="40" height="40" viewBox="0 0 40 40"><path d="M31.2 2.500C27 0 21 1.500 17.500 7C16 10 16.200 13.500 16.400 16.200Q16.400 17.200 15.500 17.900L2.600 30C0.500 32 0.500 35.500 2.600 37.400C4.500 39 6.500 38.600 8 37L21.500 24Q22.300 23.400 23.500 23.500C28 24 33 22.500 36.500 18.500C39 15.500 39.800 12 37 9L30.400 16L23.400 9.400Z" fill="none" stroke="#1d1d28" stroke-width="2.5" stroke-linecap="round" stroke-linejoin="round"/></svg>
<svg style="left:1283px;top:1850.6px" width="36" height="41" viewBox="0 0 36 41"><path d="M14.5 39H4.2Q1.5 39 1.5 36.300V4.200Q1.500 1.500 4.200 1.500H18.500L29.300 12.300V19.500M16 6.500V13.500H24.200" fill="none" stroke="#5b3fb5" stroke-width="2.45" stroke-linecap="round" stroke-linejoin="round"/><circle cx="26.3" cy="31.200" r="5.1" fill="none" stroke="#5b3fb5" stroke-width="2.45"/><line x1="30.200" y1="35.200" x2="34.300" y2="39.300" stroke="#5b3fb5" stroke-width="2.45" stroke-linecap="round"/></svg><div class="t cell " id="c4t_0" style="left:1411.5px;top:1858.1px;letter-spacing:1.391px;transform:scaleX(1.0350);transform-origin:0 0;">Buttons</div><div class="t cell " id="c4n_0" style="left:1649.9px;top:1858.1px;letter-spacing:1.130px;transform:scaleX(1.0350);transform-origin:0 0;">Combo</div><div class="t cell lnk" id="c4r_0" style="left:2191.3px;top:1817.7px;letter-spacing:1.226px;transform:scaleX(1.0350);transform-origin:0 0;">UC - Button</div><div class="t cell lnk" id="c4r_1" style="left:2191.3px;top:1858.2px;letter-spacing:0.946px;transform:scaleX(1.0350);transform-origin:0 0;">names should</div><div class="t cell lnk" id="c4r_2" style="left:2191.3px;top:1897.9px;letter-spacing:0.821px;transform:scaleX(1.0350);transform-origin:0 0;">be upper case</div><div class="t cell " id="c4c_0" style="left:2460.1px;top:1858.1px;letter-spacing:0.688px;transform:scaleX(1.0350);transform-origin:0 0;">Button name: Combo</div><div class="btn" style="left:3104px;top:1832.0px;width:100px;height:80px;border-radius:10px"></div><svg style="left:3138px;top:1851.5px" width="34" height="41" viewBox="0 0 34 41"><path d="M12 38.700H5.200Q1.700 38.700 1.700 35.200V7.200Q1.700 3.700 5.200 3.700H11.500C13 3.700 13.200 3 13.800 2.200Q15.460 -0.200 17.100 2.200C17.700 3 17.900 3.700 19.400 3.700H25.800Q29.300 3.700 29.300 7.200V16M9.100 3.700V8.600H21.850V3.700M22.600 27.600L31.400 36M31.400 27.600L22.600 36" fill="none" stroke="#1d1d28" stroke-width="2.5" stroke-linecap="round" stroke-linejoin="round"/></svg><div class="a" style="left:3290px;top:1832.0px;width:100px;height:80px;border-radius:10px;background:#f6bd74;border:2px solid #eab067"></div><svg style="left:3320px;top:1851.5px" width="40" height="40" viewBox="0 0 40 40"><path d="M31.2 2.500C27 0 21 1.500 17.500 7C16 10 16.200 13.500 16.400 16.200Q16.400 17.200 15.500 17.900L2.600 30C0.500 32 0.500 35.500 2.600 37.400C4.500 39 6.500 38.600 8 37L21.500 24Q22.300 23.400 23.500 23.500C28 24 33 22.500 36.500 18.500C39 15.500 39.800 12 37 9L30.400 16L23.400 9.400Z" fill="none" stroke="#1d1d28" stroke-width="2.5" stroke-linecap="round" stroke-linejoin="round"/></svg>
</body></html>
